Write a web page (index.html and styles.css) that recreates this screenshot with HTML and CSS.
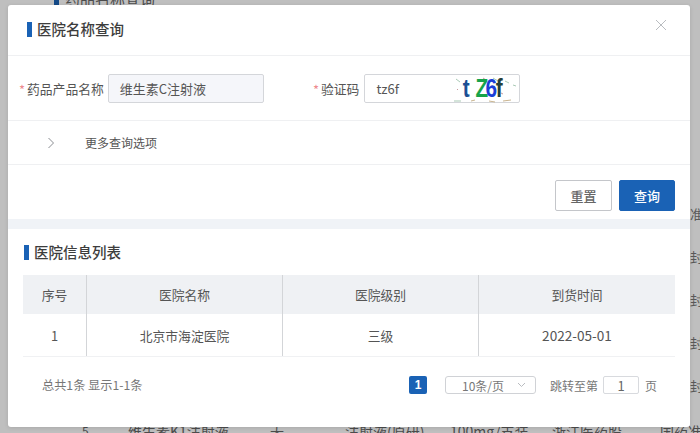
FILE: index.html
```html
<!DOCTYPE html>
<html lang="zh">
<head>
<meta charset="utf-8">
<title>医院名称查询</title>
<link rel="stylesheet" href="styles.css">
</head>
<body>
<div class="page">
  <div class="page-title">药品名称查询</div>
  <div class="page-rows">
    <div class="page-row"><span>5</span><span>维生素K1注射液</span><span>无</span><span>注射液(原研)</span><span>100mg/支装</span><span>浙江医药股</span><span>国药准字</span></div>
  </div>
  <div class="page-side">
    <span>准</span><span>封</span><span>封</span><span>封</span><span>封</span>
  </div>
</div>
<div class="mask"></div>
<div class="dialog">
  <header class="dlg-head">
    <h2 class="heading">医院名称查询</h2>
    <svg class="close" width="12" height="12" viewBox="0 0 12 12"><path d="M1 1l10 10M11 1L1 11"/></svg>
  </header>
  <section class="form-row">
    <div class="field field-name">
      <label class="label"><i>*</i>药品产品名称</label>
      <div class="input input-filled">维生素C注射液</div>
    </div>
    <div class="field field-code">
      <label class="label label-code"><i>*</i>验证码</label>
      <div class="input input-code">
        <span>tz6f</span>
        <div class="captcha">
          <svg class="noise" width="66" height="28" viewBox="0 0 66 28"><path class="n1" d="M3 4l4 3M40 3l5 3M52 6l4 2M60 10l3 1M1 26h7"/><path class="n2" d="M18 26l4-1M36 26l6 1M50 26l8-1"/><path class="n3" d="M4 14l1 1M48 18l2 1M30 3l3 2"/></svg>
          <b class="c1">t</b><b class="c2">Z</b><b class="c3">6</b><b class="c4">f</b>
        </div>
      </div>
    </div>
  </section>
  <section class="more-row">
    <svg class="chev" width="8" height="12" viewBox="0 0 8 12"><path d="M1.5 1l5 5-5 5"/></svg>
    <span>更多查询选项</span>
  </section>
  <section class="actions">
    <button class="btn">重置</button>
    <button class="btn btn-primary">查询</button>
  </section>
  <div class="band"></div>
  <section class="list">
    <h2 class="heading heading-list">医院信息列表</h2>
    <div class="table">
      <div class="cell th">序号</div>
      <div class="cell th">医院名称</div>
      <div class="cell th">医院级别</div>
      <div class="cell th">到货时间</div>
      <div class="cell td">1</div>
      <div class="cell td">北京市海淀医院</div>
      <div class="cell td">三级</div>
      <div class="cell td td-date">2022-05-01</div>
    </div>
    <div class="pager">
      <span class="total">总共1条 显示1-1条</span>
      <span class="cur">1</span>
      <div class="size">10条/页<svg width="9" height="6" viewBox="0 0 9 6"><path d="M1 1l3.500 3.500L8 1"/></svg></div>
      <span class="jump">跳转至第</span>
      <div class="jump-box">1</div>
      <span class="jump">页</span>
    </div>
  </section>
</div>
</body>
</html>
```

FILE: styles.css
```css
* { box-sizing: border-box; }
html, body { margin: 0; height: 100%; overflow: hidden; }
body {
  width: 700px;
  height: 433px;
  font-family: "Noto Sans CJK SC", "Noto Sans", sans-serif;
  color: #555;
  font-size: 12px;
  position: relative;
  background: #fff;
}
.page { position: absolute; inset: 0; overflow: hidden; color: #666; }
.page-title {
  position: absolute; left: 65px; top: -12px; font-size: 15px;
}
.page-title::before {
  content: ""; position: absolute; left: -11px; top: 6px; width: 5px; height: 15px; background: #1a62b5;
}
.page-rows { position: absolute; left: 0; right: 0; top: 420px; }
.page-row {
  display: grid;
  grid-template-columns: 128px 142px 75px 105px 102px 108px 40px;
  white-space: nowrap; font-size: 14px; height: 22px; line-height: 22px;
}
.page-row span:first-child { padding-left: 82px; font-size: 12px; }
.page-row span { overflow: hidden; }
.page-side {
  position: absolute; left: 690px; top: 204px; width: 10px; overflow: hidden;
  display: flex; flex-direction: column; gap: 23px; font-size: 13px; line-height: 20px; color: #777;
}
.mask { position: absolute; inset: 0; background: rgba(0,0,0,.25); }
.dialog {
  position: absolute; left: 8px; top: 5px; width: 682px; height: 422px;
  background: #fff; border-radius: 3px; overflow: hidden;
  box-shadow: 0 1px 4px rgba(0,0,0,.12);
}
.dlg-head {
  height: 51px; border-bottom: 1px solid #eff0f2;
  display: flex; justify-content: space-between; padding: 17px 23px 0 19px;
}
.close { margin-top: -3px; }
.close path { stroke: #b9bcc0; stroke-width: 1; fill: none; }
.heading {
  margin: 0; font-size: 14.5px; font-weight: 500; line-height: 20px; color: #3d3d3d;
  border-left: 5px solid #1a62b5; padding: 0 0 2px 5px; height: 15px;
  display: flex; align-items: center;
}
.form-row {
  height: 65px; border-bottom: 1px solid #eff0f2;
  display: flex; align-items: flex-start; padding: 18px 0 0 11px;
}
.field { display: flex; align-items: center; }
.field-name { width: 294px; }
.label { font-size: 12.8px; color: #555; white-space: nowrap; display: flex; align-items: center; margin-right: 4px; }
.label-code { margin-right: 5px; }
.label i { color: #ee8a8f; font-style: normal; margin-right: 2px; width: 6px; font-size: 13px; position: relative; top: 1px; }
.input {
  height: 29px; border: 1px solid #d4d6da; border-radius: 2px;
  font-size: 13px; color: #555; display: flex; align-items: center; padding-left: 11px;
}
.input-filled { width: 156px; background: #f5f6fa; }
.input-code { width: 156px; background: #fff; justify-content: space-between; padding-right: 0; }
.captcha {
  position: relative; width: 66px; height: 27px; display: flex; align-items: center; justify-content: flex-start;
  font-family: "Liberation Sans", sans-serif; font-size: 26px; line-height: 27px; padding-left: 8.600px;
}
.captcha b { position: relative; display: inline-block; transform: scaleX(.8); }
.c1 { color: #1c4f94; margin-right: 3.700px; }
.c2 { color: #17a34a; }
.c3 { color: #1b3fd6; margin-left: -6.250px; }
.c4 { color: #23403a; margin-left: -3.600px; }
.noise { position: absolute; inset: 0; }
.noise path { fill: none; stroke-width: 1; }
.n1 { stroke: #a9c9b5; }
.n2 { stroke: #c9b48f; }
.n3 { stroke: #c99aa0; }
.more-row {
  height: 44px; border-bottom: 1px solid #eff0f2;
  display: flex; align-items: center; padding-left: 39px; font-size: 12px; color: #555;
}
.more-row span { margin-left: 30px; }
.chev path { fill: none; stroke: #8a8d92; stroke-width: 1; }
.actions {
  height: 54px; display: flex; justify-content: flex-end; align-items: flex-start;
  gap: 7px; padding: 15px 15px 0 0;
}
.btn {
  width: 57px; height: 31px; border: 1px solid #c4c6ca; border-radius: 2px; background: #fff;
  font: 500 13px "Noto Sans CJK SC", sans-serif; color: #666; padding: 0;
}
.btn-primary { width: 56px; background: #1a62b5; border-color: #1a62b5; color: #fff; }
.band { height: 10px; background: #f0f3f7; }
.list { padding: 16px 15px 0; }
.heading-list { margin-left: 1px; }
.table {
  margin-top: 15px;
  display: grid; grid-template-columns: 63px 196px 196px 197px; grid-template-rows: 39px 42px;
  border-bottom: 1px solid #f0f1f3; font-size: 12.800px; color: #555;
}
.cell { display: flex; align-items: center; justify-content: center; border-left: 1px solid #d3d5d8; }
.cell:nth-child(4n+1) { border-left: 0; }
.th { background: #eff1f4; }
.td-date { font-size: 13.600px; }
.pager {
  display: flex; align-items: center; margin-top: 18px; padding-left: 19px; color: #777; font-size: 12.200px; height: 20px;
}
.total { width: 367px; }
.cur {
  width: 18px; height: 18px; background: #1a62b5; color: #fff; font: 700 12px "Liberation Sans", sans-serif;
  border-radius: 2px; display: flex; align-items: center; justify-content: center;
}
.size {
  margin-left: 18px; width: 91px; height: 18px; border: 1px solid #d0d2d6; border-radius: 3px;
  display: flex; align-items: center; justify-content: space-between; padding: 0 9px 0 16px; font-size: 12px; color: #777;
}
.size path { fill: none; stroke: #b9bcc0; stroke-width: 1; }
.jump { margin-left: 14px; font-size: 12px; color: #777; }
.jump-box {
  margin-left: 5px; width: 36px; height: 18px; border: 1px solid #d8dade; border-radius: 2px; font-size: 13px;
  display: flex; align-items: center; justify-content: center; color: #666;
}
.jump-box + .jump { margin-left: 6px; }
```
